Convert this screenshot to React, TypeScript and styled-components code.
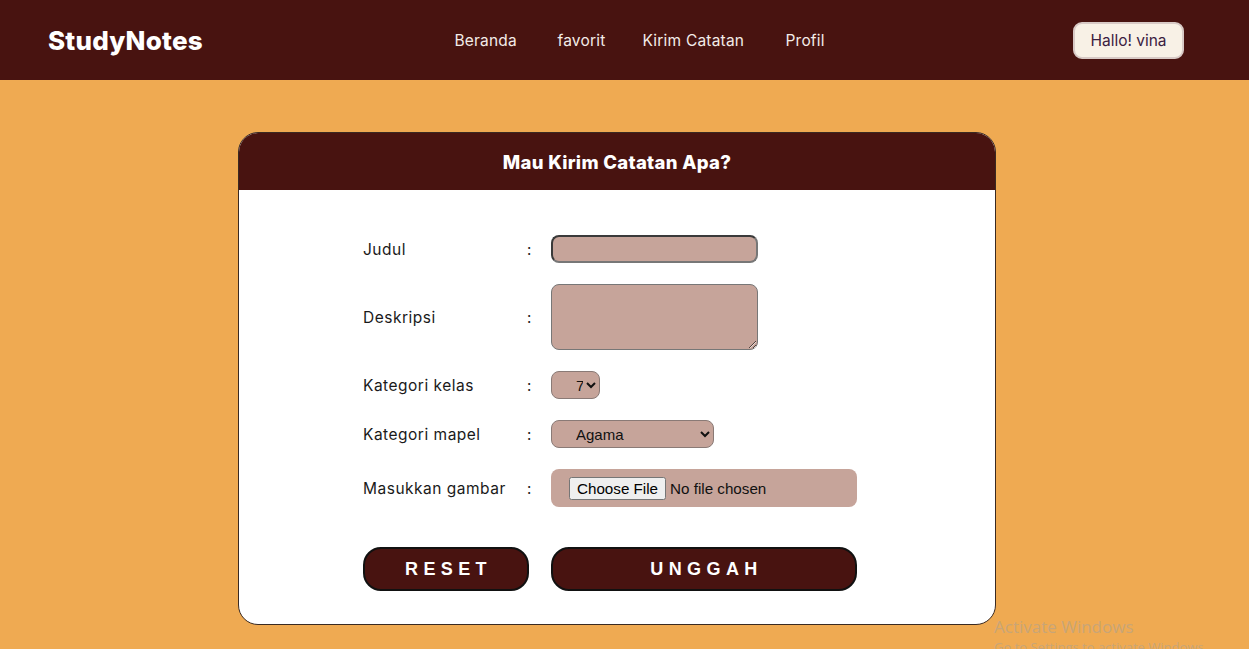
import React from "react";
import styled, { createGlobalStyle } from "styled-components";

const Global = createGlobalStyle`
  html, body { margin: 0; padding: 0; }
  body {
    background: #efaa52;
    font-family: "Poppins", "Inter", "Noto Sans", sans-serif;
    overflow: hidden;
  }
  * { box-sizing: border-box; }
`;

const Page = styled.div`
  min-height: 649px;
  position: relative;
`;

const Nav = styled.nav`
  height: 80px;
  background: #481310;
  display: grid;
  grid-template-columns: 1fr auto 1fr;
  align-items: center;
  padding: 0 65px 0 48px;
`;

const Logo = styled.div`
  color: #fff;
  font-family: "Inter", sans-serif;
  font-weight: 800;
  font-size: 26px;
  letter-spacing: 0.2px;
`;

const Links = styled.ul`
  display: flex;
  list-style: none;
  margin: 0;
  padding: 0;
  transform: translateX(24px);
`;

const LinkItem = styled.li<{ $w: number }>`
  color: #f3ece8;
  font-family: "Inter", sans-serif;
  font-size: 15.5px;
  letter-spacing: 0.2px;
  width: ${(p) => p.$w}px;
`;

const Greeting = styled.button`
  justify-self: end;
  width: 111px;
  height: 37px;
  background: #f8f1e6;
  color: #3b2040;
  border: 2px solid #d8cac6;
  border-radius: 9px;
  font-family: "Inter", sans-serif;
  font-size: 15.5px;
  padding: 0;
`;

const Main = styled.main`
  display: flex;
  justify-content: center;
  padding-top: 52px;
`;

const Card = styled.section`
  width: 758px;
  background: #fff;
  border: 1px solid #3a2a22;
  border-radius: 20px;
  overflow: hidden;
  margin-right: 15px;
`;

const CardHeader = styled.header`
  height: 57px;
  background: #481310;
  color: #fff;
  display: flex;
  align-items: center;
  justify-content: center;
  font-family: "Inter", sans-serif;
  font-weight: 800;
  font-size: 18.5px;
  letter-spacing: 0.3px;
`;

const Form = styled.form`
  padding: 45px 0 33px 124px;
  display: grid;
  grid-template-columns: 164px 24px 306px;
  row-gap: 21px;
  align-items: center;
`;

const Label = styled.label`
  font-family: "Inter", sans-serif;
  font-size: 15.5px;
  letter-spacing: 0.5px;
  color: #1a1a1a;
`;

const Colon = styled.span`
  font-family: "Inter", sans-serif;
  font-size: 15px;
  color: #1a1a1a;
`;

const fieldBg = "#c6a49a";

const TextInput = styled.input`
  width: 207px;
  height: 28px;
  background: ${fieldBg};
  border: 2px solid #3a3a3a;
  border-right-color: #777;
  border-bottom-color: #777;
  border-radius: 8px;
`;

const TextArea = styled.textarea`
  width: 207px;
  height: 66px;
  background: ${fieldBg};
  border: 1px solid #777;
  border-radius: 8px;
  display: block;
`;

const Select = styled.select<{ $w: number }>`
  width: ${(p) => p.$w}px;
  height: 28px;
  background: ${fieldBg};
  border: 1px solid #8a7a76;
  border-radius: 8px;
  font-family: "Liberation Sans", Arial, sans-serif;
  font-size: 15px;
  color: #111;
  padding-left: 20px;
`;

const FileBox = styled.div`
  width: 306px;
  height: 38px;
  background: ${fieldBg};
  border-radius: 8px;
  display: flex;
  align-items: center;
  padding-left: 18px;
`;

const FileInput = styled.input`
  font-family: "Liberation Sans", Arial, sans-serif;
  font-size: 15.2px;
  color: #111;
`;

const Actions = styled.div`
  grid-column: 1 / -1;
  display: grid;
  grid-template-columns: 166px 306px;
  column-gap: 22px;
  margin-top: 19px;
`;

const ActionButton = styled.button`
  height: 44px;
  background: #481310;
  color: #fff;
  border: 2px solid #111;
  border-radius: 18px;
  font-family: "Liberation Sans", Arial, sans-serif;
  font-weight: 700;
  font-size: 18px;
  letter-spacing: 5.4px;
  padding: 0 0 0 5px;
`;

const Watermark = styled.div`
  position: absolute;
  left: 994px;
  top: 616px;
  color: rgba(195, 165, 125, 0.9);
  font-family: "Open Sans", "Noto Sans", sans-serif;
  font-size: 17px;
  line-height: 22px;
  pointer-events: none;
  white-space: nowrap;
`;

const WatermarkSub = styled.div`
  font-size: 13px;
  line-height: 18px;
`;

export default function App() {
  const links: [string, number][] = [
    ["Beranda", 103],
    ["favorit", 85],
    ["Kirim Catatan", 143],
    ["Profil", 40],
  ];
  return (
    <Page>
      <Global />
      <Nav>
        <Logo>StudyNotes</Logo>
        <Links>
          {links.map(([t, w]) => (
            <LinkItem key={t} $w={w}>
              {t}
            </LinkItem>
          ))}
        </Links>
        <Greeting>Hallo! vina</Greeting>
      </Nav>
      <Main>
        <Card>
          <CardHeader>Mau Kirim Catatan Apa?</CardHeader>
          <Form onSubmit={(e) => e.preventDefault()}>
            <Label>Judul</Label>
            <Colon>:</Colon>
            <div>
              <TextInput type="text" />
            </div>

            <Label>Deskripsi</Label>
            <Colon>:</Colon>
            <div>
              <TextArea />
            </div>

            <Label>Kategori kelas</Label>
            <Colon>:</Colon>
            <div>
              <Select $w={49} defaultValue="7">
                <option>7</option>
                <option>8</option>
                <option>9</option>
              </Select>
            </div>

            <Label>Kategori mapel</Label>
            <Colon>:</Colon>
            <div>
              <Select $w={163} defaultValue="Agama">
                <option>Agama</option>
                <option>Matematika</option>
                <option>IPA</option>
              </Select>
            </div>

            <Label>Masukkan gambar</Label>
            <Colon>:</Colon>
            <FileBox>
              <FileInput type="file" />
            </FileBox>

            <Actions>
              <ActionButton type="reset">RESET</ActionButton>
              <ActionButton type="submit">UNGGAH</ActionButton>
            </Actions>
          </Form>
        </Card>
      </Main>
      <Watermark>
        Activate Windows
        <WatermarkSub>Go to Settings to activate Windows.</WatermarkSub>
      </Watermark>
    </Page>
  );
}
